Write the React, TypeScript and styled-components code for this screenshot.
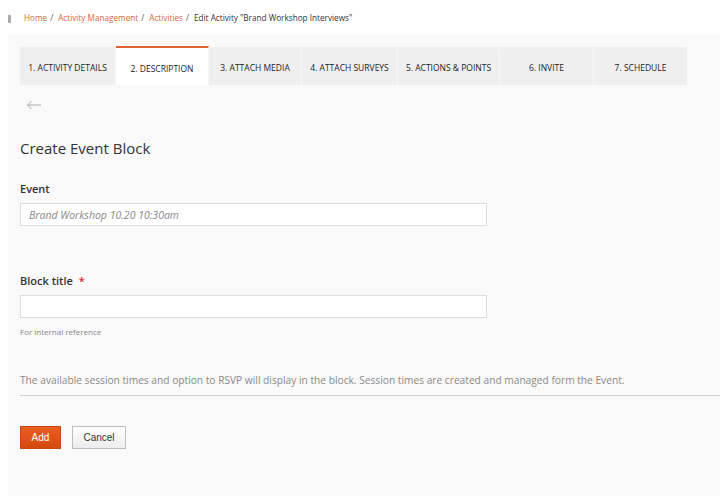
import { createGlobalStyle } from "styled-components";
import styled from "styled-components";

const GlobalStyle = createGlobalStyle`
  html, body {
    margin: 0;
    padding: 0;
    background: #ffffff;
    font-family: "Open Sans", "Noto Sans", Arial, sans-serif;
    color: #333;
  }
  * { box-sizing: border-box; }
`;

const tabs = [
  { label: "1. Activity Details", width: 96 },
  { label: "2. Description", width: 93 },
  { label: "3. Attach Media", width: 93 },
  { label: "4. Attach Surveys", width: 96 },
  { label: "5. Actions & Points", width: 102 },
  { label: "6. Invite", width: 94 },
  { label: "7. Schedule", width: 93 },
];

export default function App() {
  return (
    <Page>
      <GlobalStyle />
      <Breadcrumb>
        <CrumbMarker />
        <Crumb href="#">Home</Crumb>
        <Sep>/</Sep>
        <Crumb href="#">Activity Management</Crumb>
        <Sep>/</Sep>
        <Crumb href="#">Activities</Crumb>
        <Sep>/</Sep>
        <Current>Edit Activity "Brand Workshop Interviews"</Current>
      </Breadcrumb>

      <Panel>
        <TabBar>
          {tabs.map((t, i) => (
            <Tab key={t.label} active={i === 1} style={{ width: t.width }}>
              {t.label}
            </Tab>
          ))}
        </TabBar>

        <BackButton aria-label="Back">
          <svg width="16" height="10" viewBox="0 0 16 10" fill="none">
            <path
              d="M15 5H1.5M5.5 1L1.5 5L5.5 9"
              stroke="#a0a0a0"
              strokeWidth="0.9"
            />
          </svg>
        </BackButton>

        <Heading>Create Event Block</Heading>

        <Field>
          <Label>Event</Label>
          <Input placeholder="Brand Workshop 10.20 10:30am" italic />
        </Field>

        <Field spaced>
          <Label>
            Block title <Required>*</Required>
          </Label>
          <Input />
          <Hint>For internal reference</Hint>
        </Field>

        <Note>
          The available session times and option to RSVP will display in the
          block. Session times are created and managed form the Event.
        </Note>
        <Divider />

        <Actions>
          <PrimaryButton>Add</PrimaryButton>
          <SecondaryButton>Cancel</SecondaryButton>
        </Actions>
      </Panel>
    </Page>
  );
}

const Page = styled.div`
  width: 720px;
  height: 496px;
  overflow: hidden;
  display: flex;
  flex-direction: column;
`;

const Breadcrumb = styled.nav`
  display: flex;
  align-items: center;
  height: 35px;
  padding: 2px 0 0 8px;
  font-size: 8.2px;
  line-height: 1;
`;

const CrumbMarker = styled.span`
  width: 3px;
  height: 8px;
  background: #aaa;
  margin-right: 13px;
`;

const Crumb = styled.a`
  color: #d9663c;
  text-decoration: none;
`;

const Sep = styled.span`
  color: #555;
  margin: 0 5px 0 3px;
`;

const Current = styled.span`
  color: #333;
`;

const Panel = styled.main`
  flex: 1;
  margin-left: 8px;
  background: #f9f9f9;
  padding: 12px 0 0 12px;
  display: flex;
  flex-direction: column;
  align-items: flex-start;
`;

const TabBar = styled.div`
  display: flex;
  height: 38px;
  background: #efefef;
`;

const Tab = styled.div<{ active?: boolean }>`
  display: flex;
  align-items: center;
  justify-content: center;
  text-transform: uppercase;
  font-size: 8.5px;
  color: #222;
  border-right: 1px solid #f7f7f7;
  background: ${(p) => (p.active ? "#ffffff" : "transparent")};
  border-top: 2px solid ${(p) => (p.active ? "#e0622c" : "transparent")};
  padding-top: ${(p) => (p.active ? "3px" : "0")};
  margin-top: ${(p) => (p.active ? "-1px" : "0")};
  white-space: nowrap;
  &:last-child {
    border-right: none;
  }
`;

const BackButton = styled.button`
  border: none;
  background: none;
  padding: 0;
  margin: 15px 0 0 6px;
  height: 10px;
  display: flex;
  cursor: pointer;
`;

const Heading = styled.h2`
  font-size: 15px;
  font-weight: 400;
  color: #333;
  margin: 28px 0 0 0;
  line-height: 20px;
`;

const Field = styled.div<{ spaced?: boolean }>`
  display: flex;
  flex-direction: column;
  margin-top: ${(p) => (p.spaced ? "48px" : "24px")};
`;

const Label = styled.label`
  font-size: 11px;
  font-weight: 600;
  color: #333;
  line-height: 14px;
  margin-bottom: 7px;
`;

const Required = styled.span`
  color: #d0283a;
  margin-left: 3px;
`;

const Input = styled.input<{ italic?: boolean }>`
  width: 467px;
  height: 23px;
  border: 1px solid #dcdcdc;
  background: #fff;
  padding: 0 8px;
  font-family: inherit;
  font-size: 10.5px;
  color: #333;
  outline: none;
  &::placeholder {
    color: #888;
    font-style: ${(p) => (p.italic ? "italic" : "normal")};
  }
`;

const Hint = styled.span`
  font-size: 8px;
  color: #888;
  margin-top: 9px;
  line-height: 10px;
`;

const Note = styled.p`
  font-size: 10.2px;
  color: #8a8a8a;
  margin: 37px 0 0 0;
  line-height: 12px;
  white-space: nowrap;
`;

const Divider = styled.hr`
  align-self: stretch;
  border: none;
  border-top: 1px solid #cfcfcf;
  margin: 9px 0 0 0;
`;

const Actions = styled.div`
  display: flex;
  gap: 11px;
  margin-top: 30px;
`;

const BaseButton = styled.button`
  height: 23px;
  font-family: "Liberation Sans", Arial, sans-serif;
  font-size: 10px;
  cursor: pointer;
  padding: 0;
`;

const PrimaryButton = styled(BaseButton)`
  width: 41px;
  color: #fff;
  border: 1px solid #c9480f;
  background: linear-gradient(#ec5d20, #d44a0f);
`;

const SecondaryButton = styled(BaseButton)`
  width: 54px;
  color: #333;
  border: 1px solid #bdbdbd;
  background: linear-gradient(#ffffff, #ececec);
`;
